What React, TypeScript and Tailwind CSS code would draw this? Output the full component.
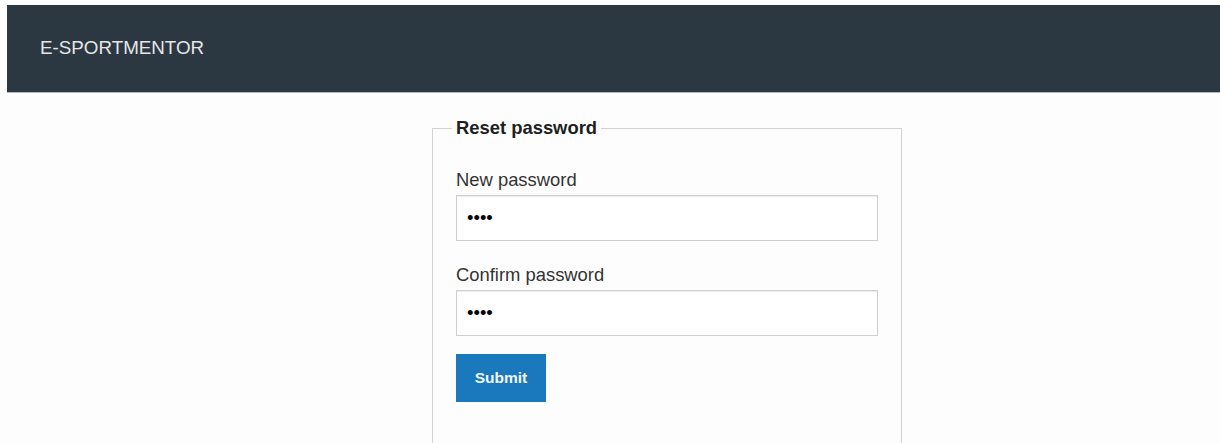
import React from "react";

const font = { fontFamily: '"Liberation Sans", Arial, sans-serif' };

function Field({ label, id }: { label: string; id: string }) {
  return (
    <div className="flex flex-col">
      <label htmlFor={id} className="text-[18.4px] leading-[24px] text-[#333] mb-[3px]">
        {label}
      </label>
      <input
        id={id}
        type="password"
        defaultValue="1234"
        className="h-[46px] w-full border border-[#cfcfcf] bg-white pl-[10px] text-[18.4px] text-black shadow-[inset_0_1px_1px_rgba(0,0,0,0.075)] outline-none"
        style={font}
      />
    </div>
  );
}

export default function App() {
  return (
    <div className="min-h-screen bg-[#fdfdfd] pt-[5px] pl-[7px]" style={font}>
      <header className="flex h-[88px] items-center border-b border-[#b8b8b8] bg-[#2c3841] pl-[33px]">
        <span className="text-[18.8px] text-[#e4e6e8]">E-SPORTMENTOR</span>
      </header>

      <form onSubmit={(e) => e.preventDefault()} className="ml-[425px] mt-[23px] w-[470px]">
        <fieldset className="border border-[#d2d2d2] px-[23px] pt-[28px] pb-[60px]">
          <legend className="ml-[-4px] px-[4px] text-[18.4px] font-bold leading-[24px] text-[#1e1e1e]">
            Reset password
          </legend>
          <Field label="New password" id="new-password" />
          <div className="mt-[22px]">
            <Field label="Confirm password" id="confirm-password" />
          </div>
          <button
            type="submit"
            className="mt-[18px] h-[48px] w-[90px] bg-[#1a78bd] text-[15.5px] font-bold text-[#f2f6fa]"
          >
            Submit
          </button>
        </fieldset>
      </form>
    </div>
  );
}
